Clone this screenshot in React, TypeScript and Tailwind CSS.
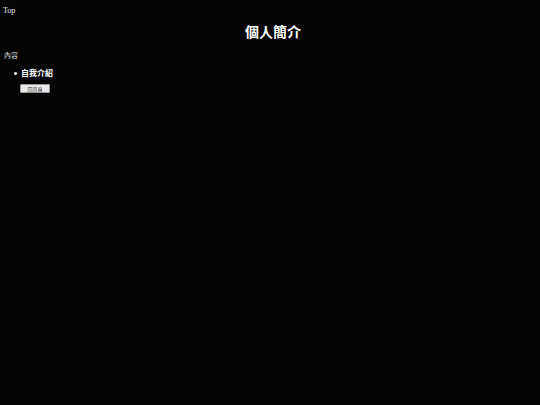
export default function App() {
  return (
    <div className="min-h-[405px] w-[540px] bg-[#050505] font-['Noto_Sans_CJK_TC',sans-serif] text-white">
      <div className="px-[3px] pt-[6px] font-['Liberation_Serif',serif] text-[8px] leading-[10px] text-[#e6e6e6]">Top</div>
      <h1 className="mt-[7px] pl-[6px] text-center text-[14px] font-bold leading-[16px]">個人簡介</h1>
      <div className="mt-[11px] px-[4px] text-[7px] leading-[10px] text-[#dcdcdc]">內容</div>
      <ul className="mt-[7px] pl-[14px]">
        <li className="flex items-center gap-[4px] text-[8px] font-bold leading-[12px]">
          <span className="h-[3px] w-[3px] rounded-full bg-white" />
          自我介紹
        </li>
      </ul>
      <div className="mt-[5px] pl-[20px]">
        <button className="flex h-[9px] w-[30px] items-center justify-center rounded-[1px] border border-[#999] bg-[#e8e8e8] text-[5px] leading-none text-[#333]">
          回首頁
        </button>
      </div>
    </div>
  )
}
